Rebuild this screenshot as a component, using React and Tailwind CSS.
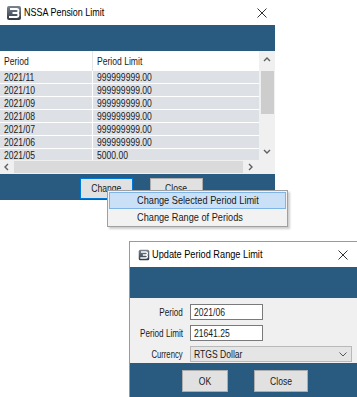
import React from "react";

const F = "font-['Liberation_Sans',Arial,sans-serif]";

function T({ children, s = "scale-x-[0.78]", o = "origin-left", className = "" }) {
  return <span className={`inline-block whitespace-nowrap ${s} ${o} ${className}`}>{children}</span>;
}

function AppIcon({ className }) {
  return (
    <svg className={className} viewBox="0 0 16 16" width="16" height="16">
      <defs>
        <linearGradient id="g1" x1="0" y1="0" x2="0" y2="1">
          <stop offset="0" stopColor="#7a8590" />
          <stop offset="1" stopColor="#2f3a45" />
        </linearGradient>
      </defs>
      <rect x="1" y="1" width="14" height="14" rx="2" fill="url(#g1)" />
      <path d="M4 4h6.5a2 2 0 0 1 0 4H6.5M6.5 8h4a2 2 0 0 1 0 4H3" fill="none" stroke="#fff" strokeWidth="1.8" />
    </svg>
  );
}

function CloseX({ className }) {
  return (
    <svg className={className} viewBox="0 0 10 10" width="10" height="10">
      <path d="M0.5 0.5L9.5 9.5M9.5 0.5L0.5 9.5" stroke="#333" strokeWidth="1" fill="none" />
    </svg>
  );
}

function Chevron({ dir, className }) {
  const paths = {
    up: "M1 5L4 2L7 5",
    down: "M1 2L4 5L7 2",
    left: "M5 1L2 4L5 7",
    right: "M2 1L5 4L2 7",
  };
  return (
    <svg className={className} viewBox="0 0 8 8" width="8" height="8">
      <path d={paths[dir]} stroke="#606060" strokeWidth="1.4" fill="none" />
    </svg>
  );
}

const rows = [
  ["2021/11", "999999999.00"],
  ["2021/10", "999999999.00"],
  ["2021/09", "999999999.00"],
  ["2021/08", "999999999.00"],
  ["2021/07", "999999999.00"],
  ["2021/06", "999999999.00"],
  ["2021/05", "5000.00"],
  ["2021/04", "5000.00"],
];

export default function App() {
  return (
    <div className={`relative w-[357px] h-[397px] bg-white overflow-hidden text-[#1a1a1a] ${F}`}>
      {/* Main window */}
      <div className="absolute left-0 top-0 w-[275px] h-[200px] flex flex-col bg-white">
        <div className="h-[25px] flex items-center pl-[6px] pr-[8px]">
          <AppIcon className="w-[16px] h-[16px]" />
          <span className="ml-[2px] text-[11.5px] leading-none text-black">
            <T s="scale-x-[0.78]">NSSA Pension Limit</T>
          </span>
          <CloseX className="ml-auto" />
        </div>
        <div className="h-[26px] bg-[#295a7f]" />
        <div className="h-[123px] flex flex-col">
          <div className="h-[109px] flex">
            <div className="w-[259px] flex flex-col overflow-hidden bg-white">
              <div className="h-[20px] shrink-0 flex text-[11px] bg-white">
                <div className="w-[93px] border-r border-[#e6e6e6] pl-[4px] flex items-center">
                  <T>Period</T>
                </div>
                <div className="pl-[4px] flex items-center">
                  <T>Period Limit</T>
                </div>
              </div>
              {rows.map(([p, v]) => (
                <div key={p} className="h-[13px] shrink-0 flex bg-[#dde1e6] border-b border-white text-[11px] leading-[12px]">
                  <div className="w-[93px] border-r border-white pl-[4px]">
                    <T>{p}</T>
                  </div>
                  <div className="pl-[4px]">
                    <T>{v}</T>
                  </div>
                </div>
              ))}
            </div>
            <div className="w-[16px] bg-[#f0f0f0] flex flex-col items-center">
              <div className="h-[17px] flex items-center justify-center">
                <Chevron dir="up" />
              </div>
              <div className="mt-[3px] w-[13px] h-[43px] bg-[#cdcdcd]" />
              <div className="mt-auto h-[17px] flex items-center justify-center">
                <Chevron dir="down" />
              </div>
            </div>
          </div>
          <div className="h-[14px] flex">
            <div className="w-[259px] bg-[#f0f0f0] flex items-center">
              <div className="w-[14px] flex justify-center">
                <Chevron dir="left" />
              </div>
              <div className="flex-1 h-[12px] bg-[#dadada]" />
              <div className="w-[16px] flex justify-center">
                <Chevron dir="right" />
              </div>
            </div>
            <div className="w-[16px] bg-[#f0f0f0]" />
          </div>
        </div>
        <div className="h-[26px] bg-[#295a7f] flex items-start pt-[4px] pl-[80px] gap-[17px]">
          <div className="w-[53px] h-[21px] bg-[#e1e1e1] border border-[#0078d7] flex items-center justify-center text-[11px]">
            <T o="origin-center">Change</T>
          </div>
          <div className="w-[53px] h-[21px] bg-[#e1e1e1] border border-[#adadad] flex items-center justify-center text-[11px]">
            <T o="origin-center">Close</T>
          </div>
        </div>
      </div>

      {/* Context menu */}
      <div className="absolute left-[107px] top-[190px] w-[181px] h-[37px] bg-[#f2f2f2] border border-[#a0a0a0] shadow-[2px_2px_2px_rgba(0,0,0,0.2)] p-[1px] flex flex-col">
        <div className="h-[17px] bg-[#c9e0f7] border border-[#7fb4e6] flex items-center pl-[27px] text-[11.5px]">
          <T s="scale-x-[0.8]">Change Selected Period Limit</T>
        </div>
        <div className="h-[17px] flex items-center pl-[28px] text-[11.5px]">
          <T s="scale-x-[0.8]">Change Range of Periods</T>
        </div>
      </div>

      {/* Update dialog */}
      <div className="absolute left-[129px] top-[241px] w-[228px] h-[156px] border-t border-l border-[#9a9a9a] flex flex-col bg-white">
        <div className="h-[25px] flex items-center pl-[8px] pr-[9px]">
          <AppIcon className="w-[12px] h-[12px]" />
          <span className="ml-[2px] text-[11.5px] leading-none text-black">
            <T s="scale-x-[0.8]">Update Period Range Limit</T>
          </span>
          <CloseX className="ml-auto" />
        </div>
        <div className="h-[31px] bg-[#295a7f]" />
        <div className="h-[65px] bg-[#f0f0f0] grid grid-cols-[53px_1fr] gap-x-[7px] content-start pt-[6px] gap-y-[5px] text-[11px]">
          <div className="h-[16px] flex items-center justify-end">
            <T o="origin-right" s="scale-x-[0.74]">Period</T>
          </div>
          <div className="w-[73px] h-[16px] bg-white border border-[#7a7a7a] flex items-center pl-[3px]">
            <T>2021/06</T>
          </div>
          <div className="h-[16px] flex items-center justify-end">
            <T o="origin-right" s="scale-x-[0.74]">Period Limit</T>
          </div>
          <div className="w-[73px] h-[16px] bg-white border border-[#7a7a7a] flex items-center pl-[3px]">
            <T>21641.25</T>
          </div>
          <div className="h-[16px] flex items-center justify-end">
            <T o="origin-right" s="scale-x-[0.7]">Currency</T>
          </div>
          <div className="w-[162px] h-[16px] bg-[#e5e5e5] border border-[#b9b9b9] flex items-center pl-[3px] pr-[4px]">
            <T>RTGS Dollar</T>
            <svg className="ml-auto" viewBox="0 0 8 5" width="8" height="5">
              <path d="M0.5 0.5L4 4L7.5 0.5" stroke="#555" strokeWidth="1" fill="none" />
            </svg>
          </div>
        </div>
        <div className="flex-1 bg-[#295a7f] flex items-start pt-[7px] pl-[52px] gap-[26px]">
          <div className="w-[46px] h-[22px] bg-[#e1e1e1] border border-[#adadad] flex items-center justify-center text-[11px]">
            <T o="origin-center">OK</T>
          </div>
          <div className="w-[54px] h-[22px] bg-[#e1e1e1] border border-[#adadad] flex items-center justify-center text-[11px]">
            <T o="origin-center">Close</T>
          </div>
        </div>
      </div>
    </div>
  );
}
